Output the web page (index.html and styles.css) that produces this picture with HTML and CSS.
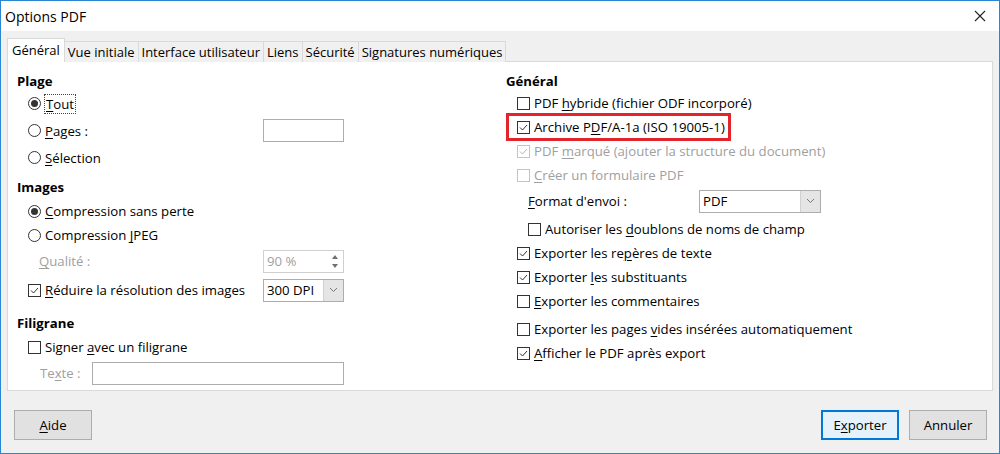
FILE: index.html
```html
<!DOCTYPE html>
<html lang="fr">
<head>
  <meta charset="UTF-8">
  <title>Options PDF</title>
  <link rel="stylesheet" href="styles.css">
</head>
<body>

  <div class="window">
    <!-- barre de titre -->
    <div class="titlebar">
      <span class="title">Options PDF</span>
      <svg class="close" width="12" height="12" viewBox="0 0 12 12"><path d="M1 1L11 11M11 1L1 11" stroke="#222" stroke-width="1.1" fill="none"/></svg>
    </div>

    <div class="content">
      <!-- onglets -->
      <div class="tabs">
        <div class="tab active">Général</div>
        <div class="tab">Vue initiale</div>
        <div class="tab">Interface utilisateur</div>
        <div class="tab">Liens</div>
        <div class="tab">Sécurité</div>
        <div class="tab">Signatures numériques</div>
      </div>

      <div class="panel">
        <!-- colonne gauche -->
        <div class="col left">
          <div class="heading">Plage</div>
          <div class="row r27"><span class="rb on"></span><span class="focus"><u>T</u>out</span></div>
          <div class="row r27 split"><span class="lbl"><span class="rb"></span><span><u>P</u>ages :</span></span><span class="field"></span></div>
          <div class="row r27"><span class="rb"></span><span><u>S</u>élection</span></div>

          <div class="heading mt7">Images</div>
          <div class="row mt3"><span class="rb on"></span><span><u>C</u>ompression sans perte</span></div>
          <div class="row"><span class="rb"></span><span>Compression <u>J</u>PEG</span></div>
          <div class="row r28 split sub"><span class="dim"><u>Q</u>ualité :</span>
            <span class="field spin"><span class="val">90 %</span><span class="arrows"><i class="up"></i><i class="down"></i></span></span>
          </div>
          <div class="row r30 split"><span class="lbl"><span class="cb on"><svg width="11" height="11" viewBox="0 0 11 11"><path d="M2 5.5L4.5 8L9 3" stroke="#333" stroke-width="1" fill="none"/></svg></span><span><u>R</u>éduire la résolution des images</span></span>
            <span class="field combo"><span class="val">300 DPI</span><span class="drop"><svg width="9" height="6" viewBox="0 0 9 6"><path d="M1 1L4.5 4.5L8 1" stroke="#777" stroke-width="1" fill="none"/></svg></span></span>
          </div>

          <div class="heading mt10">Filigrane</div>
          <div class="row mt3"><span class="cb"></span><span>Signer <u>a</u>vec un filigrane</span></div>
          <div class="row r28 sub texte"><span class="dim">Te<u>x</u>te :</span><span class="field wide"></span></div>
        </div>

        <!-- colonne droite -->
        <div class="col right">
          <div class="heading">Général</div>
          <div class="row mt1"><span class="cb"></span><span>PDF <u>h</u>ybride (fichier ODF incorporé)</span></div>
          <div class="row"><span class="mark"><span class="cb on"><svg width="11" height="11" viewBox="0 0 11 11"><path d="M2 5.5L4.5 8L9 3" stroke="#333" stroke-width="1" fill="none"/></svg></span><span>Archive P<u>D</u>F/A-1a (ISO 19005-1)</span></span></div>
          <div class="row dimrow"><span class="cb off on"><svg width="11" height="11" viewBox="0 0 11 11"><path d="M2 5.5L4.5 8L9 3" stroke="#b5b5b5" stroke-width="1" fill="none"/></svg></span><span>PDF <u>m</u>arqué (ajouter la structure du document)</span></div>
          <div class="row dimrow"><span class="cb off"></span><span><u>C</u>réer un formulaire PDF</span></div>
          <div class="row r28 sub2 format"><span class="fmt-lbl"><u>F</u>ormat d'envoi :</span>
            <span class="field combo long"><span class="val">PDF</span><span class="drop"><svg width="9" height="6" viewBox="0 0 9 6"><path d="M1 1L4.5 4.5L8 1" stroke="#777" stroke-width="1" fill="none"/></svg></span></span>
          </div>
          <div class="row mt2 sub2"><span class="cb"></span><span>Autoriser les <u>d</u>oublons de noms de champ</span></div>
          <div class="row"><span class="cb on"><svg width="11" height="11" viewBox="0 0 11 11"><path d="M2 5.5L4.5 8L9 3" stroke="#333" stroke-width="1" fill="none"/></svg></span><span>Exporter les re<u>p</u>ères de texte</span></div>
          <div class="row"><span class="cb on"><svg width="11" height="11" viewBox="0 0 11 11"><path d="M2 5.5L4.5 8L9 3" stroke="#333" stroke-width="1" fill="none"/></svg></span><span>Exporter <u>l</u>es substituants</span></div>
          <div class="row"><span class="cb"></span><span><u>E</u>xporter les commentaires</span></div>
          <div class="row mt4"><span class="cb"></span><span>Exporter les pages <u>v</u>ides insérées automatiquement</span></div>
          <div class="row"><span class="cb on"><svg width="11" height="11" viewBox="0 0 11 11"><path d="M2 5.5L4.5 8L9 3" stroke="#333" stroke-width="1" fill="none"/></svg></span><span><u>A</u>fficher le PDF après export</span></div>
        </div>
      </div>

      <!-- boutons -->
      <div class="buttons">
        <button class="btn"><u>A</u>ide</button>
        <span class="spacer"></span>
        <button class="btn default">E<u>x</u>porter</button>
        <button class="btn">Annuler</button>
      </div>
    </div>
  </div>

</body>
</html>
```

FILE: styles.css
```css
body {
  margin: 0;
  font-family: 'Open Sans', 'Noto Sans', sans-serif;
  font-size: 13.2px;
  color: #000;
  background: #f0f0f0;
}
u {
  text-decoration: underline;
  text-underline-offset: 2px;
  text-decoration-thickness: 1px;
}

.window {
  width: 1000px;
  height: 454px;
  box-sizing: border-box;
  border: 1px solid #2a86d2;
  background: #f0f0f0;
}
.titlebar {
  height: 30px;
  background: #fff;
  display: flex;
  align-items: center;
  padding: 0 13px 0 4px;
}
.title {
  font-size: 14px;
  flex: 1;
}

.content {
  padding: 8px 6px 0 6px;
}

/* onglets */
.tabs {
  display: flex;
  align-items: flex-end;
  height: 23px;
  font-size: 13px;
}
.tab {
  height: 20px;
  line-height: 20px;
  padding: 0 3px;
  background: #f0f0f0;
  border: 1px solid #d9d9d9;
  border-bottom: none;
  margin-left: -1px;
  white-space: nowrap;
}
.tab.active {
  height: 23px;
  line-height: 23px;
  background: #fff;
  margin-left: 0;
  position: relative;
  z-index: 1;
  padding: 0 4px;
}

.panel {
  height: 330px;
  box-sizing: border-box;
  background: #fff;
  border: 1px solid #d9d9d9;
  margin-top: -1px;
  padding: 10px 0 0 9px;
  display: grid;
  grid-template-columns: 489px 1fr;
}
.col {
  display: flex;
  flex-direction: column;
}
.left {
  width: 327px;
}

.heading {
  font-weight: bold;
  height: 18px;
  line-height: 18px;
}
.row {
  height: 24px;
  display: flex;
  align-items: center;
  padding-left: 11px;
  white-space: nowrap;
}
.row > span + span, .lbl > span + span, .mark > span + span {
  margin-left: 4px;
}
.r27 { height: 27px; }
.r28 { height: 28px; }
.r30 { height: 30px; }
.mt1 { margin-top: 1px; }
.mt2 { margin-top: 2px; }
.mt3 { margin-top: 3px; }
.mt4 { margin-top: 4px; }
.mt7 { margin-top: 7px; }
.mt10 { margin-top: 9px; }
.split { justify-content: space-between; }
.lbl { display: flex; align-items: center; }
.sub { padding-left: 22px; }
.sub2 { padding-left: 22px; }
.texte { padding-left: 23px; }
.texte .field { margin-left: 11px; }
.dim, .dimrow { color: #a0a0a0; }

.focus {
  outline: 1px dotted #444;
  outline-offset: 0;
  padding: 0 1px;
}

/* cases et boutons radio */
.cb, .rb {
  width: 13px;
  height: 13px;
  box-sizing: border-box;
  border: 1px solid #333;
  background: #fff;
  display: inline-flex;
  align-items: center;
  justify-content: center;
  flex: none;
}
.cb.off { border-color: #c4c4c4; }
.rb { border-radius: 50%; }
.rb.on::after {
  content: "";
  width: 7px;
  height: 7px;
  border-radius: 50%;
  background: #333;
}

/* champs */
.field {
  width: 81px;
  height: 23px;
  box-sizing: border-box;
  border: 1px solid #adadad;
  background: #fff;
  display: inline-flex;
  align-items: center;
  flex: none;
}
.field.wide {
  flex: 1;
  width: auto;
}
.val {
  flex: 1;
  padding-left: 3px;
}
.spin {
  border-color: #d0d0d0;
  color: #a0a0a0;
}
.arrows {
  width: 17px;
  height: 100%;
  display: flex;
  flex-direction: column;
  align-items: center;
  justify-content: center;
  gap: 5px;
}
.arrows i {
  width: 0;
  height: 0;
  border-left: 3px solid transparent;
  border-right: 3px solid transparent;
}
.arrows .up { border-bottom: 4px solid #707070; }
.arrows .down { border-top: 4px solid #707070; }
.combo .drop {
  width: 19px;
  height: 100%;
  background: #e5e5e5;
  border-left: 1px solid #d0d0d0;
  display: flex;
  align-items: center;
  justify-content: center;
}
.combo.long {
  width: 122px;
}
.fmt-lbl {
  width: 172px;
  margin-right: -5px;
}

/* cadre rouge d'annotation */
.mark {
  position: relative;
  display: inline-flex;
  align-items: center;
}
.mark::after {
  content: "";
  position: absolute;
  left: -11px;
  right: -6px;
  top: -5px;
  bottom: -5px;
  border: 3px solid #e3242b;
}

/* boutons */
.buttons {
  display: flex;
  margin-top: 19px;
  padding: 0 6px 0 7px;
  gap: 10px;
}
.spacer { flex: 1; }
.btn {
  width: 78px;
  height: 30px;
  font-family: inherit;
  font-size: 13.2px;
  background: #e1e1e1;
  border: 1px solid #adadad;
  color: #000;
  padding: 0;
}
.btn.default {
  border: 2px solid #0078d7;
  background: #e5f1fb;
}
```
